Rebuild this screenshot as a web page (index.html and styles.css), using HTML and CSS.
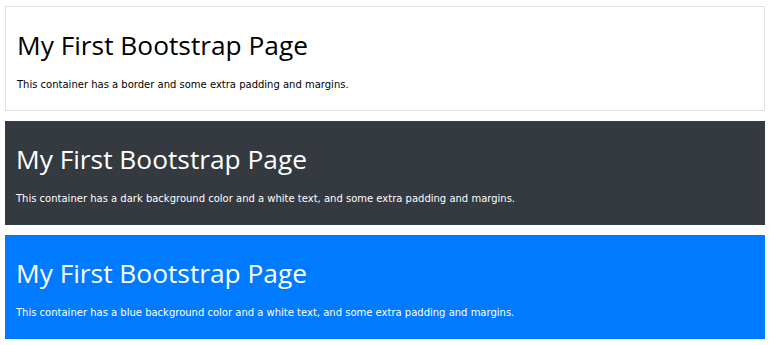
FILE: index.html
```html
<!DOCTYPE html>
<html lang="en">
<head>
  <meta charset="UTF-8" />
  <meta name="viewport" content="width=device-width, initial-scale=1" />
  <title>Bootstrap Example</title>
  <link rel="stylesheet" href="styles.css">
</head>
<body>

<div class="container bordered">
  <h1>My First Bootstrap Page</h1>
  <p>This container has a border and some extra padding and margins.</p>
</div>

<div class="container dark">
  <h1>My First Bootstrap Page</h1>
  <p>This container has a dark background color and a white text, and some extra padding and margins.</p>
</div>

<div class="container primary">
  <h1>My First Bootstrap Page</h1>
  <p>This container has a blue background color and a white text, and some extra padding and margins.</p>
</div>

</body>
</html>
```

FILE: styles.css
```css
body {
  margin: 0;
  padding: 6px 6px 0 5px;
  background: #fff;
  color: #212529;
  font-family: 'DejaVu Sans', Verdana, sans-serif;
}

.container {
  height: 104px;
  box-sizing: border-box;
  padding: 23px 11px 0;
  margin-bottom: 10px;
}

.container h1 {
  margin: 0 0 15px;
  font-family: 'Open Sans', 'Noto Sans', sans-serif;
  font-weight: 400;
  font-size: 26.3px;
  line-height: 1.2;
}

.container p {
  margin: 0;
  font-size: 10px;
  line-height: 1.5;
}

.bordered {
  border: 1px solid #dee2e6;
  height: 105px;
  color: #000;
}

.dark {
  background-color: #343a40;
  color: #fff;
}

.primary {
  background-color: #007bff;
  color: #fff;
}
```
